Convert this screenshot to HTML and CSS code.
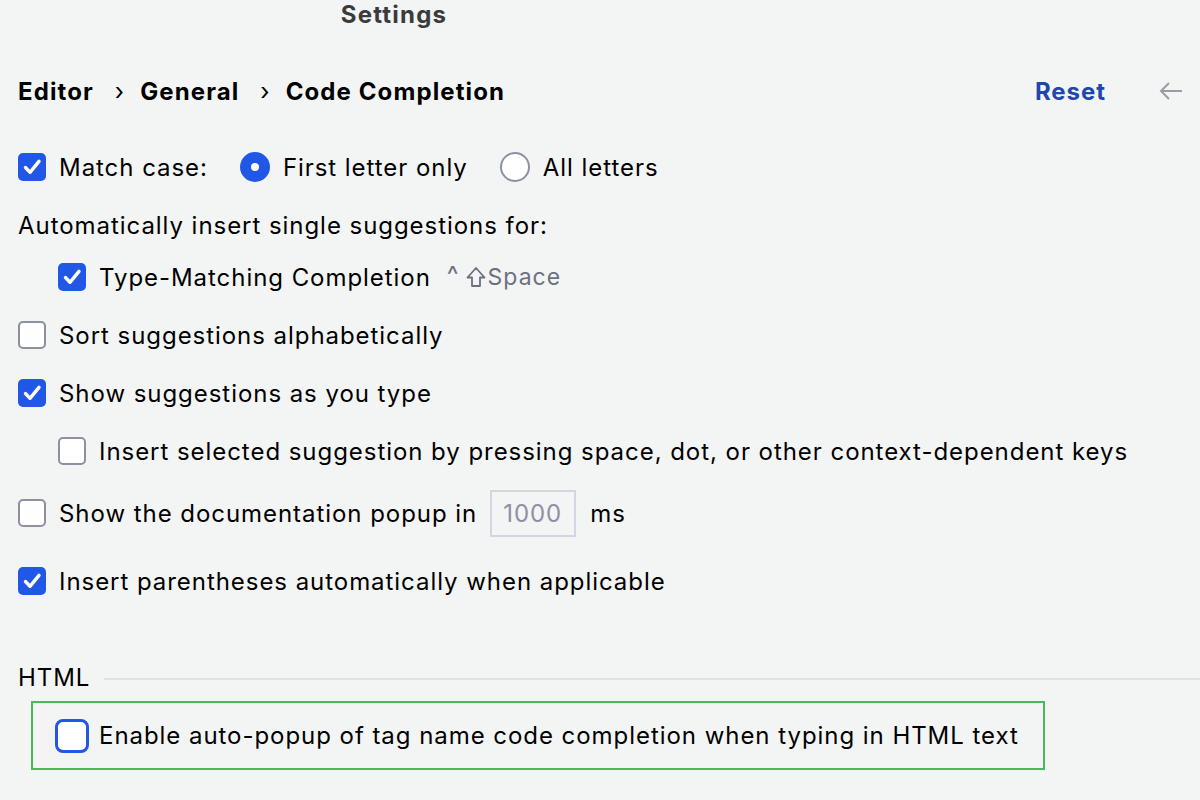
FILE: index.html
```html
<!DOCTYPE html>
<html>
<head>
<meta charset="utf-8">
<link rel="stylesheet" href="styles.css">
</head>
<body>
<div class="title">Settings</div>
<div class="header">
  <div class="crumbs">
    <span>Editor</span><span class="sep">›</span><span>General</span><span class="sep">›</span><span>Code Completion</span>
  </div>
  <div class="actions">
    <span class="reset">Reset</span>
    <svg class="back" width="26" height="20" viewBox="0 0 26 20"><path d="M24 10H3M11 2L3 10l8 8" fill="none" stroke="#9a9ca3" stroke-width="2"/></svg>
  </div>
</div>
<div class="content">
  <div class="row r-first">
    <span class="cb on"><svg viewBox="0 0 28 28"><path d="M7.5 14.5l4.5 4.8 9-11" fill="none" stroke="#fff" stroke-width="3.4" stroke-linecap="round" stroke-linejoin="round"/></svg></span>
    <span class="label">Match case:</span>
    <span class="radio on"></span><span class="label">First letter only</span>
    <span class="radio"></span><span class="label">All letters</span>
  </div>
  <div class="row g18"><span class="text">Automatically insert single suggestions for:</span></div>
  <div class="row g12 indent">
    <span class="cb on"><svg viewBox="0 0 28 28"><path d="M7.5 14.5l4.5 4.8 9-11" fill="none" stroke="#fff" stroke-width="3.4" stroke-linecap="round" stroke-linejoin="round"/></svg></span>
    <span class="label">Type-Matching Completion</span>
    <span class="shortcut"><span class="caret">^</span><svg class="shift" width="20" height="22" viewBox="0 0 20 22"><path d="M10 2L18.5 11.5H14V20H6V11.5H1.5Z" fill="none" stroke="#6c707e" stroke-width="1.8" stroke-linejoin="round"/></svg><span>Space</span></span>
  </div>
  <div class="row g18">
    <span class="cb"></span><span class="label">Sort suggestions alphabetically</span>
  </div>
  <div class="row g18">
    <span class="cb on"><svg viewBox="0 0 28 28"><path d="M7.5 14.5l4.5 4.8 9-11" fill="none" stroke="#fff" stroke-width="3.4" stroke-linecap="round" stroke-linejoin="round"/></svg></span>
    <span class="label">Show suggestions as you type</span>
  </div>
  <div class="row g18 indent">
    <span class="cb"></span><span class="label">Insert selected suggestion by pressing space, dot, or other context-dependent keys</span>
  </div>
  <div class="row g22">
    <span class="cb"></span><span class="label">Show the documentation popup in</span>
    <span class="field">1000</span><span class="label ms">ms</span>
  </div>
  <div class="row g28">
    <span class="cb on"><svg viewBox="0 0 28 28"><path d="M7.5 14.5l4.5 4.8 9-11" fill="none" stroke="#fff" stroke-width="3.4" stroke-linecap="round" stroke-linejoin="round"/></svg></span>
    <span class="label">Insert parentheses automatically when applicable</span>
  </div>
  <div class="row g56 section">
    <span class="text">HTML</span><span class="line"></span>
  </div>
  <div class="highlight">
    <span class="cb focus"></span><span class="label">Enable auto-popup of tag name code completion when typing in HTML text</span>
  </div>
</div>
</body>
</html>
```
FILE: styles.css
```css
html, body {
  margin: 0;
  padding: 0;
  background: #f3f5f5;
  font-family: Inter, "Noto Sans", "DejaVu Sans", sans-serif;
  color: #000;
  font-size: 24px;
  letter-spacing: 0.95px;
}
.title {
  width: 788px;
  height: 30px;
  line-height: 30px;
  text-align: center;
  font-weight: 700;
  color: #3a3b3d;
  letter-spacing: 1.2px;
}
.header {
  margin-top: 41px;
  height: 40px;
  display: flex;
  align-items: center;
  justify-content: space-between;
  padding: 0 16px 0 18px;
}
.crumbs {
  display: flex;
  align-items: center;
  font-weight: 700;
  letter-spacing: 1.1px;
}
.crumbs .sep {
  font-weight: 400;
  margin: 0 15px 0 21px;
}
.actions {
  display: flex;
  align-items: center;
}
.reset {
  color: #1f47ad;
  font-weight: 700;
  margin-right: 52px;
}
.content {
  padding-left: 18px;
  padding-top: 36px;
  display: flex;
  flex-direction: column;
}
.row {
  height: 40px;
  display: flex;
  align-items: center;
}
.g12 { margin-top: 12px; }
.g18 { margin-top: 18px; }
.g22 { margin-top: 22px; }
.g28 { margin-top: 28px; }
.g56 { margin-top: 56px; }
.indent { padding-left: 40px; }
.cb {
  width: 28px;
  height: 28px;
  box-sizing: border-box;
  border: 2px solid #8c90a2;
  border-radius: 5px;
  background: #fff;
  flex: none;
  display: flex;
}
.cb.on {
  background: #2157e6;
  border: none;
}
.cb svg {
  width: 28px;
  height: 28px;
}
.cb.focus {
  width: 34px;
  height: 34px;
  border: 3.5px solid #2157e6;
  border-radius: 8px;
}
.label {
  margin-left: 13px;
  white-space: nowrap;
}
.radio {
  width: 30px;
  height: 30px;
  box-sizing: border-box;
  border-radius: 50%;
  border: 2px solid #8c90a2;
  background: #fff;
  margin-left: 32px;
  flex: none;
}
.radio.on {
  border: 11px solid #2157e6;
}
.shortcut {
  margin-left: 16px;
  color: #6c707e;
  font-size: 23px;
  display: flex;
  align-items: center;
  letter-spacing: 1px;
}
.shortcut .caret {
  font-size: 25px;
  margin-top: -4px;
}
.shortcut .shift {
  margin: 0 2px 0 6px;
}
.field {
  margin-left: 13px;
  width: 86px;
  height: 47px;
  box-sizing: border-box;
  border: 2px solid #d3d6e0;
  color: #8d90a0;
  padding-left: 11px;
  display: flex;
  align-items: center;
}
.ms { margin-left: 14px; }
.text { white-space: nowrap; }
.section .line {
  flex: 1;
  height: 2px;
  background: #dfe1ea;
  margin-left: 14px;
  margin-top: 4px;
}
.highlight {
  margin-top: 4px;
  margin-left: 13px;
  width: 1014px;
  height: 69px;
  box-sizing: border-box;
  border: 2px solid #4cb85c;
  display: flex;
  align-items: center;
  padding-left: 22px;
}
.highlight .label {
  margin-left: 10px;
}
```
